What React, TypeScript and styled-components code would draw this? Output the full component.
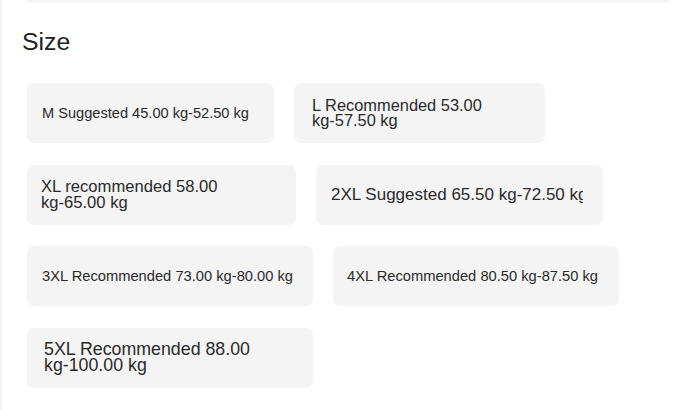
import React from 'react'
import styled, { createGlobalStyle } from 'styled-components'

type Size = {
    label: string
    width: number
    padLeft: number
    padRight: number
    fontSize: number
    lineHeight?: number
    clip?: number
}

const sizes: Size[] = [
    { label: 'M Suggested 45.00 kg-52.50 kg', width: 247, padLeft: 15, padRight: 15, fontSize: 14.6 },
    { label: 'L Recommended 53.00 kg-57.50 kg', width: 251, padLeft: 18, padRight: 18, fontSize: 16.4, lineHeight: 14.7 },
    { label: 'XL recommended 58.00 kg-65.00 kg', width: 269, padLeft: 14, padRight: 20, fontSize: 16.6, lineHeight: 15.3 },
    { label: '2XL Suggested 65.50 kg-72.50 kg', width: 287, padLeft: 15, padRight: 20, fontSize: 17, clip: 252 },
    { label: '3XL Recommended 73.00 kg-80.00 kg', width: 286, padLeft: 15, padRight: 15, fontSize: 14.7 },
    { label: '4XL Recommended 80.50 kg-87.50 kg', width: 286, padLeft: 14, padRight: 15, fontSize: 14.7 },
    { label: '5XL Recommended 88.00 kg-100.00 kg', width: 286, padLeft: 17, padRight: 20, fontSize: 17.8, lineHeight: 15.3 },
]

const App: React.FunctionComponent = () => {
    return (
        <Page>
            <GlobalStyle />
            <PrevCard />
            <Title>Size</Title>
            <Options>
                {sizes.map((s) => (
                    <Option key={s.label} $width={s.width} $padLeft={s.padLeft} $padRight={s.padRight}>
                        <OptionText $fontSize={s.fontSize} $lineHeight={s.lineHeight} $clip={s.clip}>
                            {s.label.split(' ').map((word, i) => (
                                <React.Fragment key={i}>
                                    {i > 0 && ' '}
                                    <Word>{word}</Word>
                                </React.Fragment>
                            ))}
                        </OptionText>
                    </Option>
                ))}
            </Options>
        </Page>
    )
}

export default App

const GlobalStyle = createGlobalStyle`
    html, body {
        margin: 0;
        padding: 0;
        background: #fff;
    }
    body {
        font-family: "Liberation Sans", Arial, sans-serif;
    }
`

const Page = styled.div`
    min-height: 410px;
    border-left: 2px solid #f5f5f5;
    box-sizing: border-box;
    overflow: hidden;
`

const PrevCard = styled.div`
    height: 3px;
    margin: 0 5px 0 25px;
    background: #f6f6f6;
    border-radius: 0 0 4px 4px;
`

const Title = styled.div`
    margin: 25px 0 0 20px;
    font-size: 24.8px;
    line-height: 28px;
    color: #222;
`

const Options = styled.div`
    display: flex;
    flex-wrap: wrap;
    gap: 21.6px 20px;
    padding: 27px 0 0 25px;
`

const Option = styled.div<{ $width: number; $padLeft: number; $padRight: number }>`
    box-sizing: border-box;
    display: flex;
    align-items: center;
    width: ${(p) => p.$width}px;
    height: 60px;
    padding: 0 ${(p) => p.$padRight}px 0 ${(p) => p.$padLeft}px;
    background: #f4f4f4;
    border-radius: 7px;
    overflow: hidden;
`

const OptionText = styled.span<{ $fontSize: number; $lineHeight?: number; $clip?: number }>`
    font-size: ${(p) => p.$fontSize}px;
    line-height: ${(p) => (p.$lineHeight ? `${p.$lineHeight}px` : 'normal')};
    color: #2a2a2a;
    ${(p) =>
        p.$clip
            ? `white-space: nowrap; overflow: hidden; display: block; width: ${p.$clip}px;`
            : ''}
`

const Word = styled.span`
    white-space: nowrap;
`
